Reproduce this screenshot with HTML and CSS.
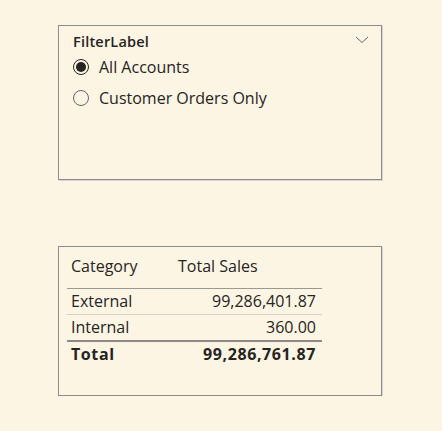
FILE: index.html
```html
<!DOCTYPE html>
<html>
<head>
    <title>Filter and Sales</title>
    <link rel="stylesheet" href="styles.css">
</head>
<body>
    <div class="visual slicer">
        <div class="slicer-head">
            <span class="slicer-title">FilterLabel</span>
            <svg class="chevron" width="14" height="8" viewBox="0 0 14 8">
                <path d="M1 1 L7 6.5 L13 1" fill="none" stroke="#666" stroke-width="1"/>
            </svg>
        </div>
        <label class="option">
            <span class="radio checked"></span>
            <span>All Accounts</span>
        </label>
        <label class="option">
            <span class="radio"></span>
            <span>Customer Orders Only</span>
        </label>
    </div>

    <div class="visual matrix">
        <table>
            <thead>
                <tr><th>Category</th><th>Total Sales</th></tr>
            </thead>
            <tbody>
                <tr><td>External</td><td class="num">99,286,401.87</td></tr>
                <tr><td>Internal</td><td class="num">360.00</td></tr>
            </tbody>
            <tfoot>
                <tr><td>Total</td><td class="num">99,286,761.87</td></tr>
            </tfoot>
        </table>
    </div>
</body>
</html>
```

FILE: styles.css
```css
body { margin: 0; background: #fdf5e4; font-family: "Open Sans", "Noto Sans", sans-serif; color: #252423; }
.visual { box-sizing: border-box; width: 324px; margin-left: 58px; border: 1px solid #8c8c8c; box-shadow: 1px 1px 0 #d8d4cc; }
.slicer { height: 155px; margin-top: 25px; padding: 5px 12px 0 14px; }
.slicer-head { display: flex; justify-content: space-between; align-items: center; height: 20px; }
.slicer-title { font-size: 14.5px; font-weight: 600; letter-spacing: 0.2px; }
.chevron { margin-top: -3px; }
.option { display: flex; align-items: center; gap: 10px; height: 31px; font-size: 16px; }
.radio { box-sizing: border-box; width: 16px; height: 16px; border: 1px solid #666; border-radius: 50%; display: flex; align-items: center; justify-content: center; }
.radio.checked { border: 1.5px solid #252423; }
.radio.checked::after { content: ""; width: 10px; height: 10px; border-radius: 50%; background: #252423; }
.matrix { height: 150px; margin-top: 66px; padding: 5px 0 0 8px; }
table { border-collapse: collapse; font-size: 16px; }
th, td { padding: 2px 4px 3px; line-height: 20px; text-align: left; }
th { font-weight: normal; padding: 4px 4px 12px; border-bottom: 1px solid #9a9893; }
th:first-child { width: 99px; }
td.num { text-align: right; width: 138px; padding-right: 6px; }
tbody tr + tr td { border-top: 1px solid #d3d0c8; }
tfoot td { border-top: 2px solid #8c8a86; font-weight: bold; letter-spacing: 0.6px; }
```
